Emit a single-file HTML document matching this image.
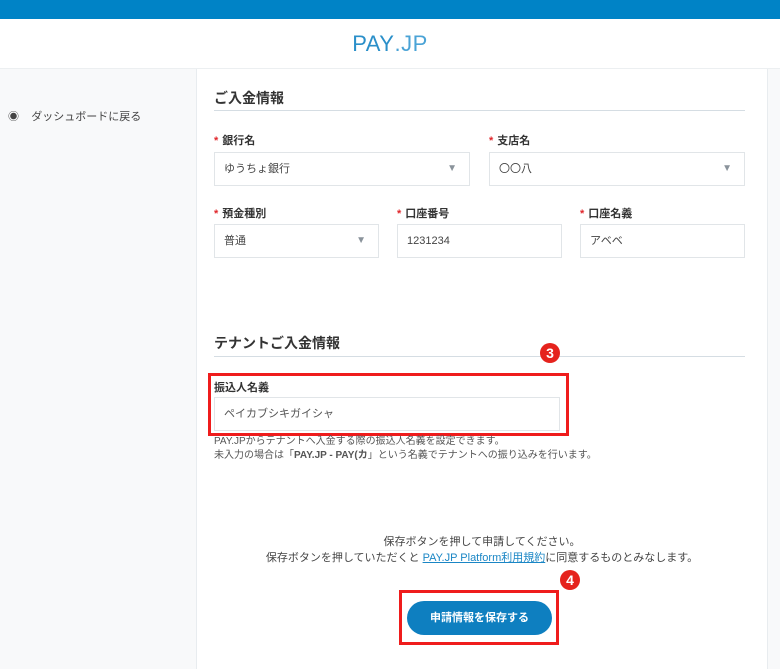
<!DOCTYPE html>
<html><head><meta charset="utf-8"><style>
*{margin:0;padding:0;box-sizing:border-box}
body{width:780px;height:662px;overflow:hidden;background:#f8f9fa;font-family:"Liberation Sans","Noto Sans CJK JP",sans-serif;color:#333;position:relative}
.a{position:absolute}
.top{left:0;top:0;width:780px;height:19px;background:#0083c6}
.hdr{left:0;top:19px;width:780px;height:50px;background:#fff;border-bottom:1px solid #eceff1;text-align:center}
.logo{font-size:22px;color:#2a8fc9;line-height:50px;letter-spacing:0.5px}
.logo span{font-weight:300;color:#4aa3d6}
.main{left:196px;top:69px;width:572px;height:600px;background:#fff;border-left:1px solid #e8ecef;border-right:1px solid #e8ecef}
.h{font-size:14px;font-weight:bold;color:#333}
.hr{height:1px;background:#d5dde3}
.lbl{font-size:11px;font-weight:bold;color:#333}
.lbl i{color:#e0262b;font-style:normal;margin-right:4px}
.in{height:34px;border:1px solid #e1e5e8;background:#fff;font-size:11px;color:#444;padding-left:9px;line-height:32px}
.tri{position:absolute;right:12px;top:0;color:#8a939b;font-size:10px}
.s{font-size:10px;color:#555}
.red{border:3px solid #ef1c1c}
.num{width:20px;height:20px;border-radius:50%;background:#e5231d;color:#fff;font-weight:bold;font-size:14px;text-align:center;line-height:20px}
</style></head><body>
<div class="a top"></div>
<div class="a hdr"><span class="logo">PAY<span>.JP</span></span></div>
<div class="a" style="left:8px;top:108px;font-size:11px;color:#444">◉&nbsp;&nbsp;&nbsp;&nbsp;ダッシュボードに戻る</div>
<div class="a main"></div>
<div class="a h" style="left:214px;top:88px">ご入金情報</div>
<div class="a hr" style="left:214px;top:110px;width:531px"></div>

<div class="a lbl" style="left:214px;top:132px"><i>*</i>銀行名</div>
<div class="a in" style="left:214px;top:152px;width:256px">ゆうちょ銀行<span class="tri" style="line-height:32px">▼</span></div>
<div class="a lbl" style="left:489px;top:132px"><i>*</i>支店名</div>
<div class="a in" style="left:489px;top:152px;width:256px">〇〇八<span class="tri" style="line-height:32px">▼</span></div>

<div class="a lbl" style="left:214px;top:205px"><i>*</i>預金種別</div>
<div class="a in" style="left:214px;top:224px;width:165px">普通<span class="tri" style="line-height:32px">▼</span></div>
<div class="a lbl" style="left:397px;top:205px"><i>*</i>口座番号</div>
<div class="a in" style="left:397px;top:224px;width:165px">1231234</div>
<div class="a lbl" style="left:580px;top:205px"><i>*</i>口座名義</div>
<div class="a in" style="left:580px;top:224px;width:165px">アベベ</div>

<div class="a h" style="left:214px;top:333px">テナントご入金情報</div>
<div class="a hr" style="left:214px;top:356px;width:531px"></div>
<div class="a num" style="left:540px;top:343px">3</div>
<div class="a red" style="left:208px;top:373px;width:361px;height:63px"></div>
<div class="a lbl" style="left:214px;top:379px">振込人名義</div>
<div class="a in" style="left:214px;top:397px;width:346px;color:#555">ペイカブシキガイシャ</div>
<div class="a s" style="left:214px;top:432px">PAY.JPからテナントへ入金する際の振込人名義を設定できます。</div>
<div class="a s" style="left:214px;top:446px">未入力の場合は「<b>PAY.JP - PAY(カ</b>」という名義でテナントへの振り込みを行います。</div>

<div class="a" style="left:196px;top:533px;width:572px;text-align:center;font-size:11px;color:#444">保存ボタンを押して申請してください。</div>
<div class="a" style="left:196px;top:549px;width:572px;text-align:center;font-size:11px;color:#444">保存ボタンを押していただくと <span style="color:#1a86c5;text-decoration:underline">PAY.JP Platform利用規約</span>に同意するものとみなします。</div>
<div class="a num" style="left:560px;top:570px">4</div>
<div class="a red" style="left:399px;top:590px;width:160px;height:55px"></div>
<div class="a" style="left:407px;top:601px;width:145px;height:34px;border-radius:17px;background:#0e7fc0;color:#fff;font-size:11px;font-weight:bold;text-align:center;line-height:34px">申請情報を保存する</div>
</body></html>
